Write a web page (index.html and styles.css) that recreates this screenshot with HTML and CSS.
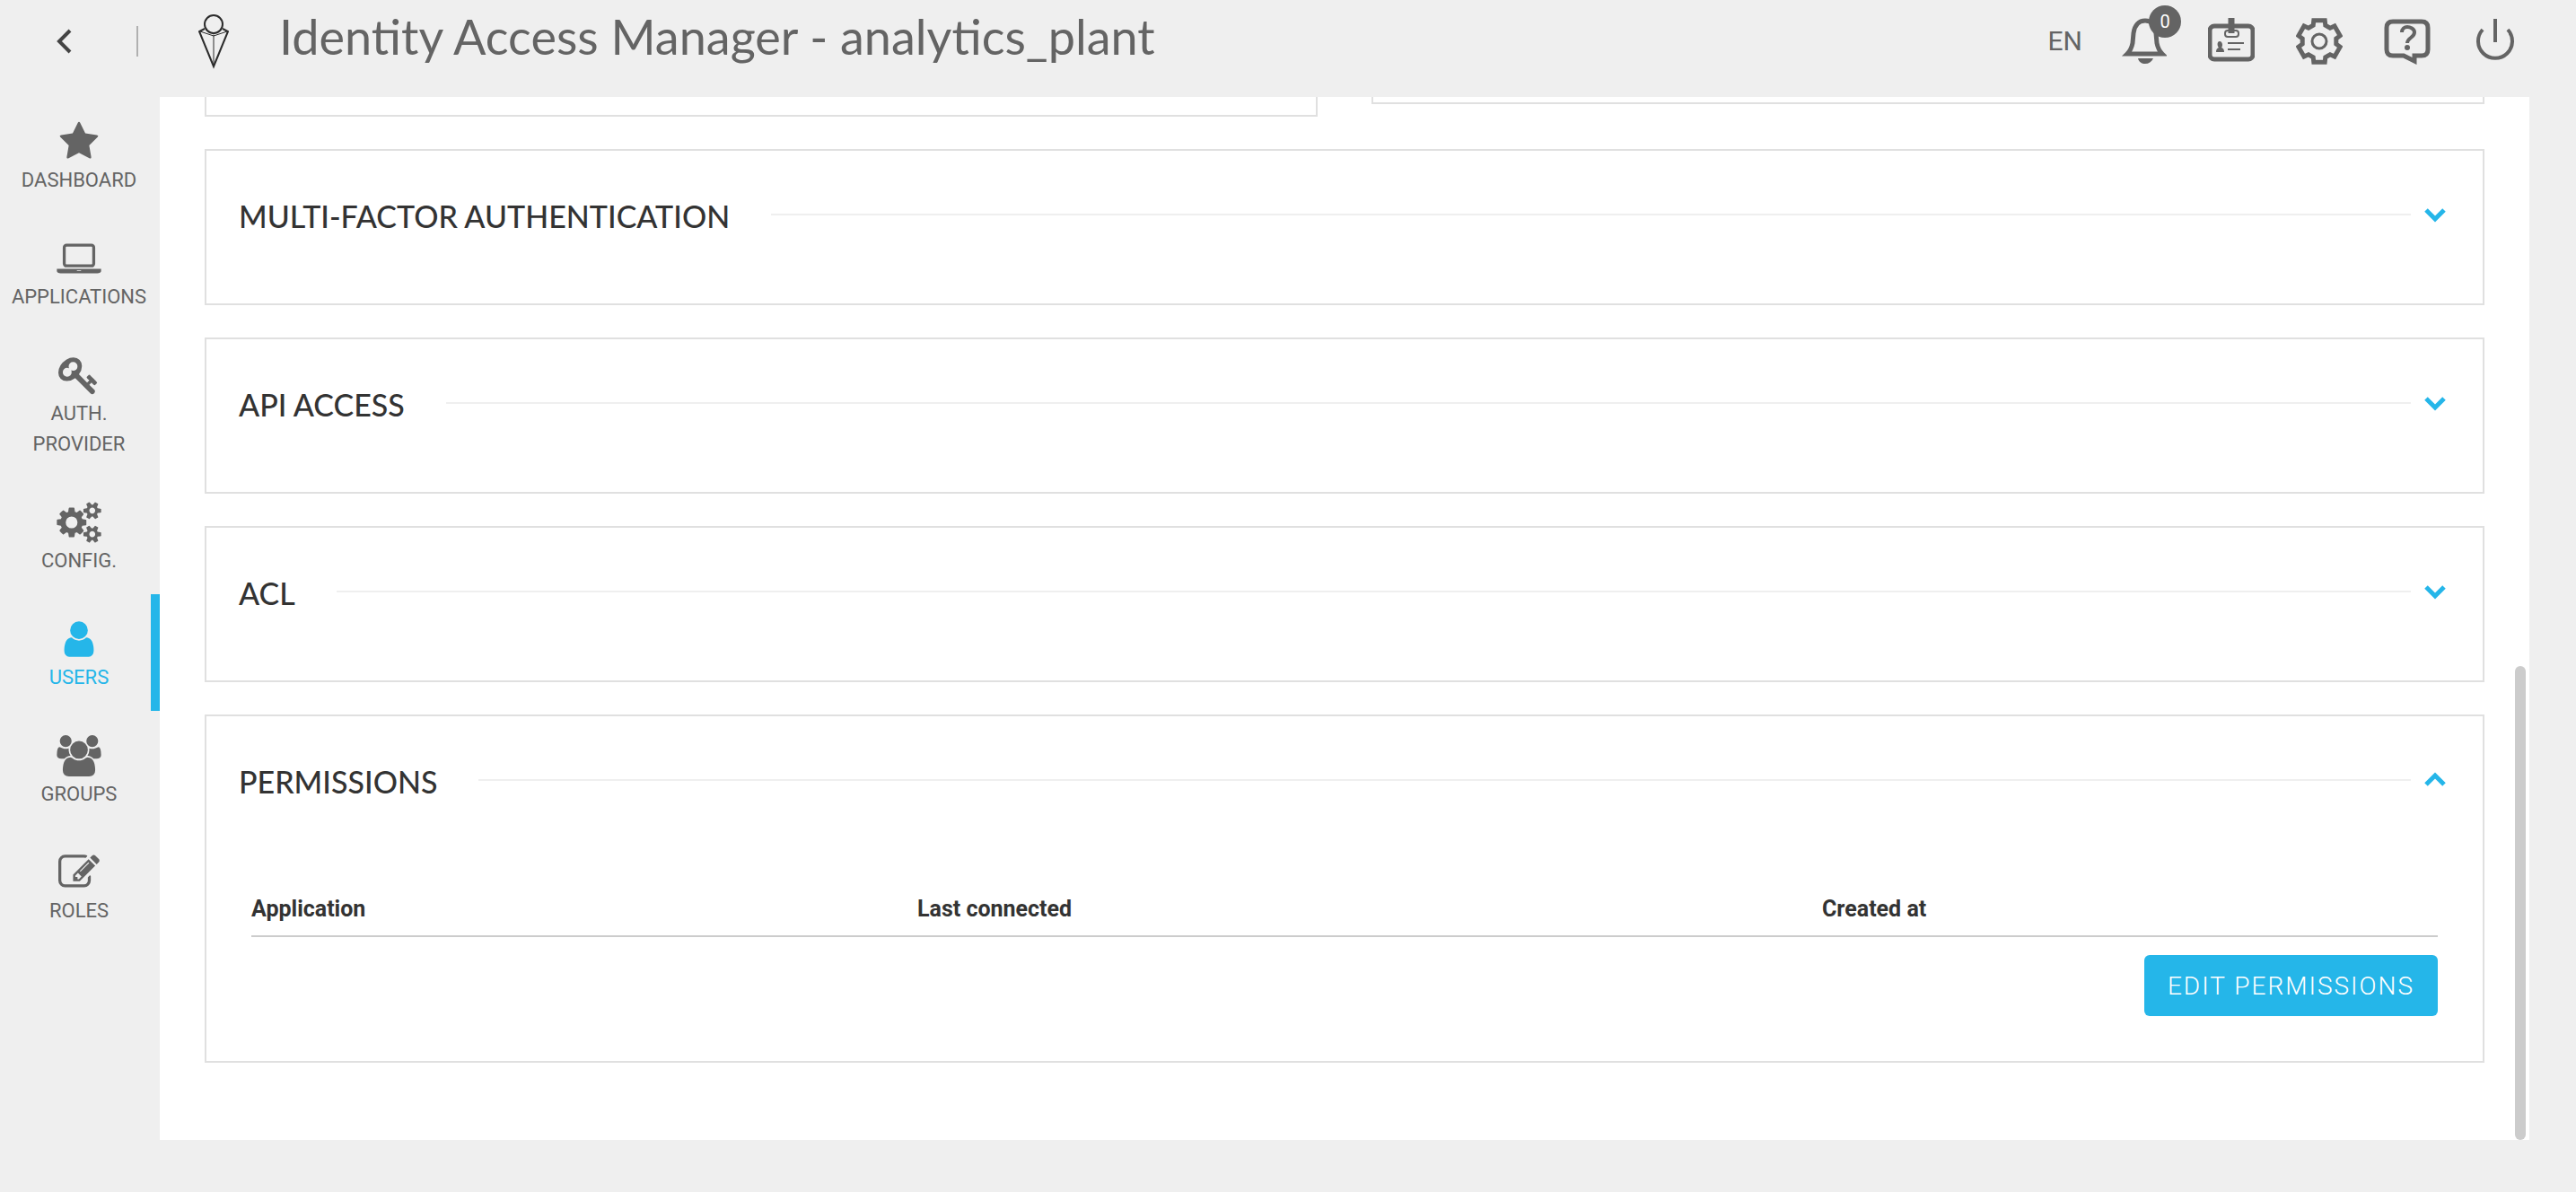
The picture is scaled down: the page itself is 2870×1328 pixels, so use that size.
FILE: index.html
```html
<!DOCTYPE html>
<html lang="en">
<head>
<meta charset="utf-8">
<meta name="viewport" content="width=device-width, initial-scale=1">
<title>Identity Access Manager - analytics_plant</title>
<link rel="stylesheet" href="styles.css">
</head>
<body>
<div class="app">
  <header class="topbar">
    <button class="icon-btn back" aria-label="Back">
      <svg width="20" height="30" viewBox="0 0 20 30"><path d="M18 3L6 15l12 12" fill="none" stroke="#444" stroke-width="4"/></svg>
    </button>
    <span class="divider"></span>
    <svg class="logo" width="34" height="62" viewBox="0 0 34 62" fill="none" stroke="#2b2b2b" stroke-width="2">
      <circle cx="17" cy="12" r="10"/>
      <path d="M7 17l-6 3 16 39 16-39-6-3"/>
      <path d="M2 20l15 5 15-5M8 18l9 5 9-5M17 24v34" stroke-width="1"/>
    </svg>
    <h1 class="title">Identity Access Manager - analytics_plant</h1>
    <div class="tools">
      <button class="lang">EN</button>
      <button class="icon-btn bell" aria-label="Notifications">
        <svg width="52" height="52" viewBox="0 0 52 52"><path d="M8 40c4-4 5-7 6-12l1-11C16 8 21 3 28 3s11 5 12 14l1 11c1 5 2 8 6 12z" fill="none" stroke="#646464" stroke-width="5"/><path d="M20 45h17c-2 4-5 6-9 6s-7-2-8-6z" fill="#646464"/></svg>
        <span class="badge">0</span>
      </button>
      <button class="icon-btn" aria-label="Profile">
        <svg width="52" height="52" viewBox="0 0 52 52" fill="none" stroke="#646464"><rect x="2" y="9" width="48" height="37" rx="5" stroke-width="5"/><rect x="19" y="14" width="15" height="7" rx="3" stroke-width="2" fill="#efefef"/><path d="M26 0v17" stroke-width="7"/><path d="M22 28h18M22 35h14" stroke-width="2"/><path d="M9 38c0-3 1-4 3-5-2-2-2-7 1-7s4 5 2 7c2 1 3 2 3 5z" fill="#646464" stroke="none"/></svg>
      </button>
      <button class="icon-btn" aria-label="Settings">
        <svg width="52" height="52" viewBox="0 0 52 52" fill="none" stroke="#646464"><path d="M19.800 2.800H32.200L32.800 8.300L38 11.200L43 9L49.200 19.800L44.800 23V29L49.200 32.200L43 43L38 40.800L32.800 43.700L32.200 49.200H19.800L19.200 43.700L14 40.800L9 43L2.800 32.200L7.200 29V23L2.800 19.800L9 9L14 11.200L19.200 8.300Z" stroke-width="5"/><circle cx="26" cy="26" r="8" stroke-width="3"/></svg>
      </button>
      <button class="icon-btn" aria-label="Help">
        <svg width="52" height="52" viewBox="0 0 52 52" fill="none" stroke="#646464"><path d="M10 4h32q7 0 7 7v24q0 7-7 7h-8v6l-12-6H10q-7 0-7-7V11q0-7 7-7z" stroke-width="5"/><path d="M20 16c0-4 3-6 6-6s8 2 8 6c0 6-8 6-8 12" stroke-width="4"/><circle cx="26" cy="33" r="3" fill="#646464" stroke="none"/></svg>
      </button>
      <button class="icon-btn" aria-label="Log out">
        <svg width="52" height="52" viewBox="0 0 52 52" fill="none" stroke="#646464" stroke-width="4"><path d="M12 13a19 19 0 1 0 28 0M26 1v26"/></svg>
      </button>
    </div>
  </header>

  <nav class="sidebar">
    <a class="nav-item" href="#dashboard"><svg width="46" height="46" viewBox="0 0 1792 1792"><path d="M1728 647q0 22-26 48l-363 354 86 500q1 7 1 20 0 21-10.500 35.500t-30.500 14.500q-19 0-40-12l-449-236-449 236q-22 12-40 12-21 0-31.500-14.500t-10.500-35.500q0-6 2-20l86-500-364-354q-25-27-25-48 0-37 56-46l502-73 225-455q19-41 49-41t49 41l225 455 502 73q56 9 56 46z"/></svg>DASHBOARD</a>
    <a class="nav-item" href="#applications"><svg width="50" height="46" viewBox="0 0 1920 1792"><path d="M416 1280q-66 0-113-47t-47-113v-704q0-66 47-113t113-47h1088q66 0 113 47t47 113v704q0 66-47 113t-113 47h-1088zm-32-864v704q0 13 9.500 22.500t22.500 9.500h1088q13 0 22.500-9.500t9.500-22.500v-704q0-13-9.500-22.500t-22.500-9.500h-1088q-13 0-22.500 9.500t-9.500 22.500zm1376 928h160v96q0 40-47 68t-113 28h-1600q-66 0-113-28t-47-68v-96h1760zm-720 96q16 0 16-16t-16-16h-160q-16 0-16 16t16 16h160z"/></svg>APPLICATIONS</a>
    <a class="nav-item" href="#auth-provider"><svg width="46" height="46" viewBox="0 0 1792 1792"><path d="M832 512q0-80-56-136t-136-56-136 56-56 136q0 42 19 83-41-19-83-19-80 0-136 56t-56 136 56 136 136 56 136-56 56-136q0-42-19-83 41 19 83 19 80 0 136-56t56-136zm851 704q0 17-49 66t-66 49q-9 0-28.500-16t-36.500-33-38.500-40-24.500-26l-96 96 220 220q28 28 28 68 0 42-39 81t-81 39q-40 0-68-28l-671-671q-176 131-365 131-163 0-265.500-102.500t-102.500-265.500q0-160 95-313t248-248 313-95q163 0 265.500 102.500t102.500 265.500q0 189-131 365l355 355 96-96q-3-3-26-24.500t-40-38.500-33-36.500-16-28.500q0-17 49-66t66-49q13 0 23 10 6 6 46 44.500t82 79.500 86.500 86 73 78 28.500 41z"/></svg>AUTH. PROVIDER</a>
    <a class="nav-item" href="#config"><svg width="50" height="46" viewBox="0 0 1920 1792"><path d="M896 896q0-106-75-181t-181-75-181 75-75 181 75 181 181 75 181-75 75-181zm768 512q0-52-38-90t-90-38-90 38-38 90q0 53 37.500 90.500t90.500 37.500 90.500-37.500 37.500-90.500zm0-1024q0-52-38-90t-90-38-90 38-38 90q0 53 37.500 90.500t90.500 37.500 90.500-37.500 37.500-90.500zm-384 421v185q0 10-7 19.500t-16 10.500l-155 24q-11 35-32 76 34 48 90 115 7 11 7 20 0 12-7 19-23 30-82.500 89.500t-78.500 59.500q-11 0-21-7l-115-90q-37 19-77 31-11 108-23 155-7 24-30 24h-186q-11 0-20-7.500t-10-17.500l-23-153q-34-10-75-31l-118 89q-7 7-20 7-11 0-21-8-144-133-144-160 0-9 7-19 10-14 41-53t47-61q-23-44-35-82l-152-24q-10-1-17-9.500t-7-19.500v-185q0-10 7-19.500t16-10.500l155-24q11-35 32-76-34-48-90-115-7-11-7-20 0-12 7-20 22-30 82-89t79-59q11 0 21 7l115 90q34-18 77-32 11-108 23-154 7-24 30-24h186q11 0 20 7.500t10 17.500l23 153q34 10 75 31l118-89q8-7 20-7 11 0 21 8 144 133 144 160 0 8-7 19-12 16-42 54t-45 60q23 48 34 82l152 23q10 2 17 10.500t7 19.500zm640 533v140q0 16-149 31-12 27-30 52 51 113 51 138 0 4-4 7-122 71-124 71-8 0-46-47t-52-68q-20 2-30 2t-30-2q-14 21-52 68t-46 47q-2 0-124-71-4-3-4-7 0-25 51-138-18-25-30-52-149-15-149-31v-140q0-16 149-31 13-29 30-52-51-113-51-138 0-4 4-7 4-2 35-20t59-34 30-16q8 0 46 46.500t52 67.500q20-2 30-2t30 2q51-71 92-112l6-2q4 0 124 70 4 3 4 7 0 25-51 138 17 23 30 52 149 15 149 31zm0-1024v140q0 16-149 31-12 27-30 52 51 113 51 138 0 4-4 7-122 71-124 71-8 0-46-47t-52-68q-20 2-30 2t-30-2q-14 21-52 68t-46 47q-2 0-124-71-4-3-4-7 0-25 51-138-18-25-30-52-149-15-149-31v-140q0-16 149-31 13-29 30-52-51-113-51-138 0-4 4-7 4-2 35-20t59-34 30-16q8 0 46 46.500t52 67.500q20-2 30-2t30 2q51-71 92-112l6-2q4 0 124 70 4 3 4 7 0 25-51 138 17 23 30 52 149 15 149 31z"/></svg>CONFIG.</a>
    <a class="nav-item active" href="#users" aria-current="page"><svg width="46" height="46" viewBox="0 0 1792 1792"><path d="M1536 1399q0 109-62.500 187t-150.500 78h-854q-88 0-150.500-78t-62.500-187q0-85 8.500-160.500t31.500-152 58.500-131 94-89 134.500-34.500q131 128 313 128t313-128q76 0 134.500 34.500t94 89 58.500 131 31.500 152 8.500 160.500zm-256-887q0 159-112.500 271.500t-271.500 112.500-271.500-112.500-112.500-271.500 112.500-271.500 271.500-112.500 271.500 112.500 112.500 271.500z"/></svg>USERS</a>
    <a class="nav-item" href="#groups"><svg width="50" height="46" viewBox="0 0 1920 1792"><path d="M593 896q-162 5-265 128h-134q-82 0-138-40.500t-56-118.500q0-353 124-353 6 0 43.500 21t97.500 42.500 119 21.500q67 0 133-23-5 37-5 66 0 139 81 256zm1071 637q0 120-73 189.500t-194 69.500h-874q-121 0-194-69.500t-73-189.500q0-53 3.500-103.500t14-109 26.500-108.500 43-97.500 62-81 85.500-53.500 111.500-20q10 0 43 21.500t73 48 107 48 135 21.500 135-21.500 107-48 73-48 43-21.500q61 0 111.500 20t85.500 53.500 62 81 43 97.500 26.500 108.500 14 109 3.500 103.500zm-1024-1277q0 106-75 181t-181 75-181-75-75-181 75-181 181-75 181 75 75 181zm704 384q0 159-112.500 271.500t-271.500 112.500-271.500-112.500-112.500-271.500 112.500-271.500 271.500-112.500 271.500 112.500 112.500 271.500zm576 225q0 78-56 118.500t-138 40.500h-134q-103-123-265-128 81-117 81-256 0-29-5-66 66 23 133 23 59 0 119-21.500t97.500-42.500 43.500-21q124 0 124 353zm-128-609q0 106-75 181t-181 75-181-75-75-181 75-181 181-75 181 75 75 181z"/></svg>GROUPS</a>
    <a class="nav-item" href="#roles"><svg width="46" height="46" viewBox="0 0 1792 1792"><path d="M888 1184l116-116-152-152-116 116v56h96v96h56zm440-720q-16-16-33 1l-350 350q-17 17-1 33t33-1l350-350q17-17 1-33zm80 594v190q0 119-84.500 203.500t-203.500 84.500h-832q-119 0-203.500-84.500t-84.500-203.500v-832q0-119 84.500-203.500t203.500-84.500h832q63 0 117 25 15 7 18 23 3 17-9 29l-49 49q-14 14-32 8-23-6-45-6h-832q-66 0-113 47t-47 113v832q0 66 47 113t113 47h832q66 0 113-47t47-113v-126q0-13 9-22l64-64q15-15 35-7t20 29zm-96-738l288 288-672 672h-288v-288zm444 132l-92 92-288-288 92-92q28-28 68-28t68 28l152 152q28 28 28 68t-28 68z"/></svg>ROLES</a>
  </nav>

  <main class="panel">
    <div class="row-top">
      <div class="card-end tall"></div>
      <div class="card-end"></div>
    </div>
    <section class="card">
      <div class="card-head">
        <h2>MULTI-FACTOR AUTHENTICATION</h2><span class="rule"></span>
        <button class="toggle" aria-label="Expand multi-factor authentication"><svg width="26" height="18" viewBox="0 0 26 18"><path d="M3 4l10 10L23 4"/></svg></button>
      </div>
    </section>
    <section class="card">
      <div class="card-head">
        <h2>API ACCESS</h2><span class="rule"></span>
        <button class="toggle" aria-label="Expand API access"><svg width="26" height="18" viewBox="0 0 26 18"><path d="M3 4l10 10L23 4"/></svg></button>
      </div>
    </section>
    <section class="card">
      <div class="card-head">
        <h2>ACL</h2><span class="rule"></span>
        <button class="toggle" aria-label="Expand ACL"><svg width="26" height="18" viewBox="0 0 26 18"><path d="M3 4l10 10L23 4"/></svg></button>
      </div>
    </section>
    <section class="card">
      <div class="card-head">
        <h2>PERMISSIONS</h2><span class="rule"></span>
        <button class="toggle" aria-label="Collapse permissions"><svg width="26" height="18" viewBox="0 0 26 18"><path d="M3 14L13 4l10 10"/></svg></button>
      </div>
      <div class="card-body">
        <table class="grid">
          <thead><tr><th class="col-app">Application</th><th class="col-last">Last connected</th><th>Created at</th></tr></thead>
        </table>
        <button class="primary">EDIT PERMISSIONS</button>
      </div>
    </section>
    <span class="scroll-thumb"></span>
  </main>
</div>
</body>
</html>
```
FILE: styles.css
```css
* { box-sizing: border-box; }

body {
  margin: 0;
  background: #efefef;
  color: #646464;
  font-family: Roboto, "Liberation Sans", sans-serif;
}

button {
  margin: 0;
  padding: 0;
  border: 0;
  background: none;
  color: inherit;
  font: inherit;
  cursor: pointer;
}

svg { display: block; flex: none; }

.app {
  display: grid;
  grid-template-columns: 178px 1fr;
  grid-template-rows: 108px 1fr;
  height: 100vh;
  padding: 0 52px 58px 0;
}

/* Top bar */
.topbar {
  grid-column: 1 / -1;
  display: flex;
  align-items: center;
  padding: 0 12px 16px 60px;
}

.divider {
  width: 2px;
  height: 34px;
  margin: 0 67px 0 72px;
  background: #b0b0b0;
}

.title {
  flex: 1;
  margin: 0 0 0 56px;
  padding-bottom: 10px;
  font: 400 54px/72px Lato, "Open Sans", sans-serif;
  white-space: nowrap;
}

.tools {
  display: flex;
  align-items: center;
  gap: 46px;
}

.lang {
  margin-right: -4px;
  font-size: 30px;
  line-height: 34px;
}

.bell { position: relative; }

.badge {
  position: absolute;
  top: -14px;
  left: 32px;
  width: 36px;
  height: 36px;
  border-radius: 50%;
  background: #646464;
  color: #fff;
  font-size: 20px;
  line-height: 36px;
}

/* Side navigation */
.sidebar { display: flex; flex-direction: column; }

.nav-item {
  display: flex;
  flex-direction: column;
  align-items: center;
  gap: 3px;
  padding: 27px 14px 20px 12px;
  color: #646464;
  font-size: 22px;
  line-height: 34px;
  text-align: center;
  text-decoration: none;
}

.nav-item svg { fill: currentColor; }

.nav-item.active {
  color: #25b6e9;
  box-shadow: inset -10px 0 #25b6e9;
}

/* Content */
.panel {
  position: relative;
  display: flex;
  flex-direction: column;
  gap: 36px;
  padding: 0 50px;
  overflow: hidden;
  background: #fff;
}

.row-top {
  display: grid;
  grid-template-columns: 1fr 1fr;
  gap: 60px;
  align-items: start;
}

.card-end {
  height: 8px;
  border: 2px solid #e0e0e0;
  border-top: 0;
}

.card-end.tall { height: 22px; }

.card {
  padding: 48px 40px 48px 36px;
  border: 2px solid #e0e0e0;
}

.card-head {
  display: flex;
  align-items: center;
  height: 46px;
  margin-bottom: 28px;
}

.card-head h2 {
  margin: 0;
  padding-top: 4px;
  color: #333;
  font: 500 34px/46px Lato, "Open Sans", sans-serif;
}

.rule {
  flex: 1;
  height: 2px;
  margin: 0 14px 0 46px;
  background: #efefef;
}

.toggle svg { fill: none; stroke: #25b6e9; stroke-width: 5; }

.card-body {
  display: flex;
  flex-direction: column;
  align-items: flex-end;
  gap: 20px;
  padding: 76px 10px 2px 14px;
}

.grid {
  width: 100%;
  border-collapse: separate;
  border-spacing: 0;
  color: #333;
}

.grid th {
  padding: 0 0 12px;
  border-bottom: 2px solid #ccc;
  font-size: 25px;
  line-height: 34px;
  text-align: left;
}

.col-app { width: 742px; }
.col-last { width: 1008px; }

.primary {
  height: 68px;
  padding: 0 26px;
  border-radius: 6px;
  background: #25b6e9;
  color: #fff;
  font-size: 28px;
  font-weight: 300;
  letter-spacing: 2px;
}

.scroll-thumb {
  position: absolute;
  right: 4px;
  bottom: 0;
  width: 12px;
  height: 528px;
  border-radius: 6px;
  background: #ccc;
}
```
